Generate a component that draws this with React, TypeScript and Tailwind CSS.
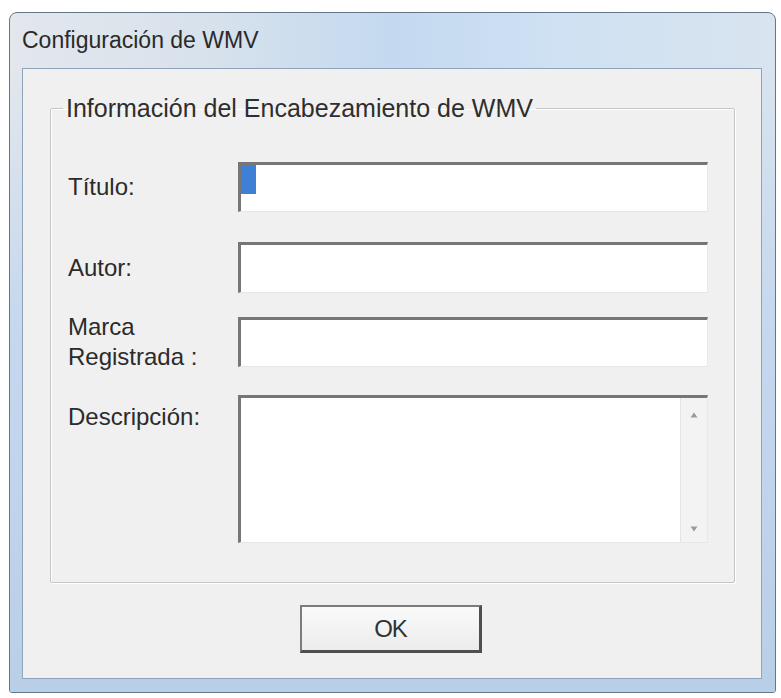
const Field = ({ h, children }: { h: string; children?: React.ReactNode }) => (
  <div
    className={`relative w-[470px] ${h} bg-white border-t-[3px] border-l-[3px] border-t-[#767676] border-l-[#767676] border-r border-b border-r-[#e9e9e9] border-b-[#e6e6e6]`}
  >
    {children}
  </div>
);

const App: React.FC = () => {
  return (
    <div className="w-[781px] h-[698px] bg-white font-['Liberation_Sans',Arial,sans-serif] text-[#2b2b2b] pt-[12px] pl-[9px]">
      <div className="w-[767px] h-[681px] flex flex-col rounded-t-[8px] rounded-b-[3px] border border-[#66768a] bg-[linear-gradient(90deg,#e3e7ec_0%,#d8e2ec_25%,#c4d9f0_50%,#cfe1f3_72%,#d8e4ef_100%)] overflow-hidden">
        {/* title bar */}
        <div className="h-[55px] shrink-0 flex items-center pl-[12px] text-[23px] leading-none text-[#2a2a2a]">
          Configuración de WMV
        </div>

        {/* frame + client */}
        <div className="flex-1 flex pl-[12px] pr-[13px] pb-[13px] bg-[linear-gradient(180deg,transparent_0%,#c6d8ee_40%,#b9cfe8_100%)]">
          <div className="w-[741px] h-[611px] bg-[#f0f0f0] border border-[#8fa3ba] flex flex-col">
            <fieldset className="ml-[27px] mt-[25px] w-[685px] h-[489px] border border-[#c6c6c6] rounded-[2px] p-0 m-0 shadow-[inset_1px_1px_0_#ffffff,1px_1px_0_#ffffff]">
              <legend className="ml-[12px] px-[3px] text-[25px] leading-[28px] text-[#2e2e2e]">
                Información del Encabezamiento de WMV
              </legend>

              <div className="grid grid-cols-[170px_470px] pl-[17px] text-[24px]">
                {/* Título */}
                <div className="mt-[40px] flex items-center h-[50px]">Título:</div>
                <div className="mt-[40px]">
                  <Field h="h-[50px]">
                    <div className="w-[15px] h-[29px] bg-[#3d80d6]" />
                  </Field>
                </div>

                {/* Autor */}
                <div className="mt-[30px] flex items-center h-[51px]">Autor:</div>
                <div className="mt-[30px]">
                  <Field h="h-[51px]" />
                </div>

                {/* Marca Registrada */}
                <div className="mt-[19px] h-[55px] leading-[30px] whitespace-nowrap">
                  Marca
                  <br />
                  Registrada :
                </div>
                <div className="mt-[24px]">
                  <Field h="h-[50px]" />
                </div>

                {/* Descripción */}
                <div className="mt-[28px] pt-[8px] leading-[28px]">Descripción:</div>
                <div className="mt-[28px]">
                  <Field h="h-[148px]">
                    <div className="absolute right-0 top-0 bottom-0 w-[27px] bg-[#f3f3f3] border-l border-[#e4e4e4] flex flex-col items-center justify-between pt-[14px] pb-[10px]">
                      <svg width="8" height="6" viewBox="0 0 8 6">
                        <path d="M4 0.5 L7.5 5.5 L0.5 5.5 Z" fill="#9a9a9a" />
                      </svg>
                      <svg width="8" height="6" viewBox="0 0 8 6">
                        <path d="M0.5 0.5 L7.5 0.5 L4 5.5 Z" fill="#9a9a9a" />
                      </svg>
                    </div>
                  </Field>
                </div>
              </div>
            </fieldset>

            <div className="flex justify-center mt-[22px] pr-[2px]">
              <button className="w-[182px] h-[48px] bg-[linear-gradient(180deg,#fafafa,#ececec)] border-2 border-[#7c7c7c] border-r-[3px] border-b-[3px] border-r-[#4f4f4f] border-b-[#4f4f4f] text-[24px] leading-none text-[#333] tracking-[-1px]">
                OK
              </button>
            </div>
          </div>
        </div>
      </div>
    </div>
  );
};

export default App;
